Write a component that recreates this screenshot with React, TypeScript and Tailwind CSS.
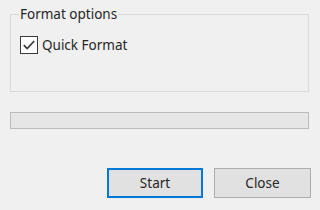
export default function App() {
  return (
    <div className="w-[320px] h-[210px] bg-[#f0f0f0] text-[#262626] font-['Noto_Sans',sans-serif] text-[13.5px] leading-[18px] overflow-hidden">
      <fieldset className="mx-[10px] mt-[5px] w-[299px] h-[87px] border border-[#dadada] px-[9px]">
        <legend className="ml-[-1px] px-[1px]">Format options</legend>
        <label className="mt-[13px] flex items-center gap-[4px]">
          <span className="w-[18px] h-[18px] border border-[#3a3a3a] bg-white flex items-center justify-center">
            <svg width="14" height="14" viewBox="0 0 14 14" fill="none">
              <path d="M1.8 7.2 L5.2 10.6 L12.2 3" stroke="#3a3a3a" strokeWidth="1.7" />
            </svg>
          </span>
          <span>Quick Format</span>
        </label>
      </fieldset>

      <div className="mx-[10px] mt-[20px] w-[299px] h-[17px] border border-[#bcbcbc] bg-[#e6e6e6]" />

      <div className="mt-[39px] flex gap-[11px] pl-[107px]">
        <button className="w-[96px] h-[30px] border-2 border-[#0078d7] bg-[#e1e1e1]">Start</button>
        <button className="w-[97px] h-[30px] border border-[#adadad] bg-[#e1e1e1]">Close</button>
      </div>
    </div>
  );
}
